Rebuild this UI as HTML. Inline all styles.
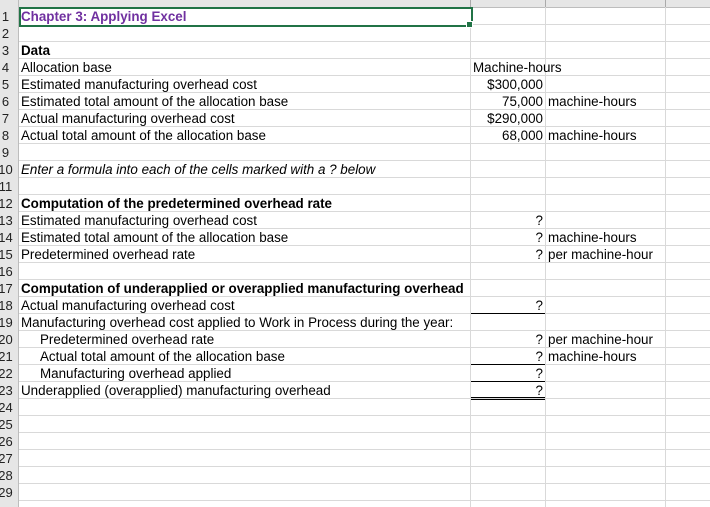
<!DOCTYPE html>
<html><head><style>
body{margin:0;width:710px;height:507px;overflow:hidden;background:#fff;font-family:"Liberation Sans",Arial,sans-serif;font-size:13.4px;position:relative}
.a{position:absolute;white-space:nowrap;line-height:17px;height:17px}
.h{position:absolute;left:0;top:0;width:18px;height:507px;background:#e6e6e6;border-right:1px solid #bdbdbd}
.rn{position:absolute;left:-4px;width:19px;text-align:center;line-height:17px;font-size:13px;color:#222}
.hl{position:absolute;left:19px;right:0;height:1px;background:#d9d9d9}
.vl{position:absolute;top:7px;bottom:0;width:1px;background:#d9d9d9}
.r{text-align:right}
.u{position:absolute;height:1px;background:#000;left:471px;width:74px}
</style></head><body>
<div style="position:absolute;left:0;top:0;width:710px;height:7px;background:#e6e6e6;border-bottom:1px solid #bdbdbd"></div>
<div class="h"></div>
<div class="vl" style="left:470px"></div>
<div class="vl" style="left:545px"></div>
<div class="vl" style="left:665px"></div>
<div style="position:absolute;left:470px;top:0;width:1px;height:7px;background:#aaa"></div>
<div style="position:absolute;left:545px;top:0;width:1px;height:7px;background:#aaa"></div>
<div style="position:absolute;left:665px;top:0;width:1px;height:7px;background:#aaa"></div>
<div id="g"></div>
<script>
var s='';for(var n=1;n<=29;n++){var t=8+17*(n-1);s+='<div class="hl" style="top:'+(t+16)+'px"></div>';s+='<div class="rn" style="top:'+t+'px">'+n+'</div>';}
document.getElementById('g').innerHTML=s;
</script>
<div style="position:absolute;left:19px;top:7px;width:450px;height:16px;border:2px solid #217346;background:#fff"></div>
<div style="position:absolute;left:466px;top:21px;width:5px;height:5px;background:#217346;border:1px solid #fff"></div>
<div class="a" style="left:21px;top:8px;color:#7030a0;font-weight:bold">Chapter 3: Applying Excel</div>
<div class="a" style="left:21px;top:42px;font-weight:bold">Data</div>
<div class="a" style="left:21px;top:59px">Allocation base</div>
<div class="a" style="left:21px;top:76px">Estimated manufacturing overhead cost</div>
<div class="a" style="left:21px;top:93px">Estimated total amount of the allocation base</div>
<div class="a" style="left:21px;top:110px">Actual manufacturing overhead cost</div>
<div class="a" style="left:21px;top:127px">Actual total amount of the allocation base</div>
<div class="a" style="left:21px;top:161px;font-style:italic">Enter a formula into each of the cells marked with a ? below</div>
<div class="a" style="left:21px;top:195px;font-weight:bold">Computation of the predetermined overhead rate</div>
<div class="a" style="left:21px;top:212px">Estimated manufacturing overhead cost</div>
<div class="a" style="left:21px;top:229px">Estimated total amount of the allocation base</div>
<div class="a" style="left:21px;top:246px">Predetermined overhead rate</div>
<div class="a" style="left:21px;top:280px;font-weight:bold">Computation of underapplied or overapplied manufacturing overhead</div>
<div class="a" style="left:21px;top:297px">Actual manufacturing overhead cost</div>
<div class="a" style="left:21px;top:314px">Manufacturing overhead cost applied to Work in Process during the year:</div>
<div class="a" style="left:40px;top:331px">Predetermined overhead rate</div>
<div class="a" style="left:40px;top:348px">Actual total amount of the allocation base</div>
<div class="a" style="left:40px;top:365px">Manufacturing overhead applied</div>
<div class="a" style="left:21px;top:382px">Underapplied (overapplied) manufacturing overhead</div>

<div class="a" style="left:473px;top:59px">Machine-hours</div>
<div class="a r" style="left:471px;width:72px;top:76px">$300,000</div>
<div class="a r" style="left:471px;width:72px;top:93px">75,000</div>
<div class="a r" style="left:471px;width:72px;top:110px">$290,000</div>
<div class="a r" style="left:471px;width:72px;top:127px">68,000</div>
<div class="a" style="left:548px;top:93px">machine-hours</div>
<div class="a" style="left:548px;top:127px">machine-hours</div>
<div class="a r" style="left:471px;width:72px;top:212px">?</div>
<div class="a r" style="left:471px;width:72px;top:229px">?</div>
<div class="a r" style="left:471px;width:72px;top:246px">?</div>
<div class="a" style="left:548px;top:229px">machine-hours</div>
<div class="a" style="left:548px;top:246px">per machine-hour</div>
<div class="a r" style="left:471px;width:72px;top:297px">?</div>
<div class="a r" style="left:471px;width:72px;top:331px">?</div>
<div class="a r" style="left:471px;width:72px;top:348px">?</div>
<div class="a r" style="left:471px;width:72px;top:365px">?</div>
<div class="a r" style="left:471px;width:72px;top:382px">?</div>
<div class="a" style="left:548px;top:331px">per machine-hour</div>
<div class="a" style="left:548px;top:348px">machine-hours</div>
<div class="u" style="top:313px"></div>
<div class="u" style="top:364px"></div>
<div class="u" style="top:381px"></div>
<div class="u" style="top:397px"></div>
<div class="u" style="top:399px"></div>
</body></html>
